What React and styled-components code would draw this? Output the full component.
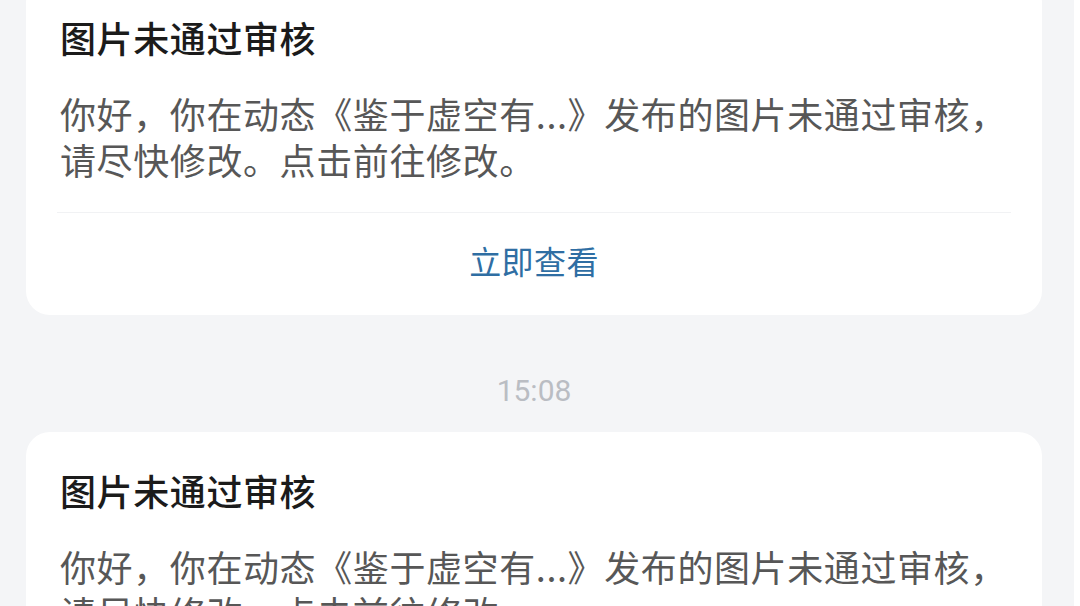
import React from "react";
import styled, { createGlobalStyle } from "styled-components";

const GlobalStyle = createGlobalStyle`
  html, body {
    margin: 0;
    padding: 0;
    background: #ffffff;
  }
  body {
    font-family: "Noto Sans CJK SC", "Noto Sans", sans-serif;
  }
`;

const messages = [
  {
    id: 1,
    time: null,
    title: "图片未通过审核",
    body: "你好，你在动态《鉴于虚空有...》发布的图片未通过审核，请尽快修改。点击前往修改。",
    action: "立即查看",
  },
  {
    id: 2,
    time: "15:08",
    title: "图片未通过审核",
    body: "你好，你在动态《鉴于虚空有...》发布的图片未通过审核，请尽快修改。点击前往修改。",
    action: "立即查看",
  },
];

const Page = styled.div`
  width: 1074px;
  height: 606px;
  overflow: hidden;
  background: #f4f5f7;
`;

const Feed = styled.div`
  margin-top: -21px;
  padding: 0 32px 0 26px;
  display: flex;
  flex-direction: column;
`;

const Time = styled.div`
  margin: 56px 0 21px;
  text-align: center;
  font-family: Roboto, "Noto Sans", sans-serif;
  font-size: 30px;
  line-height: 40px;
  color: #babdc3;
`;

const Card = styled.div`
  background: #ffffff;
  border-radius: 24px;
  padding: 34px 32px 0;
`;

const Title = styled.div`
  font-size: 36px;
  line-height: 48px;
  font-weight: 500;
  letter-spacing: 0.6px;
  color: #1b1b1b;
  padding-left: 2px;
`;

const Body = styled.div`
  margin: 29px 0 30px;
  padding-left: 2px;
  font-size: 36px;
  line-height: 46px;
  letter-spacing: 0.6px;
  color: #575757;
`;

const Divider = styled.div`
  height: 1px;
  margin: 0 -1px;
  background: #f1f2f4;
`;

const Action = styled.div`
  height: 102px;
  padding-bottom: 9px;
  box-sizing: border-box;
  display: flex;
  align-items: center;
  justify-content: center;
  font-size: 32px;
  letter-spacing: 0.4px;
  color: #2f6ea3;
`;

const Message = ({ msg }) => (
  <>
    {msg.time && <Time>{msg.time}</Time>}
    <Card>
      <Title>{msg.title}</Title>
      <Body>{msg.body}</Body>
      <Divider />
      <Action>{msg.action}</Action>
    </Card>
  </>
);

const App = () => {
  return (
    <>
      <GlobalStyle />
      <Page>
        <Feed>
          {messages.map((msg) => (
            <Message key={msg.id} msg={msg} />
          ))}
        </Feed>
      </Page>
    </>
  );
};

export default App;
